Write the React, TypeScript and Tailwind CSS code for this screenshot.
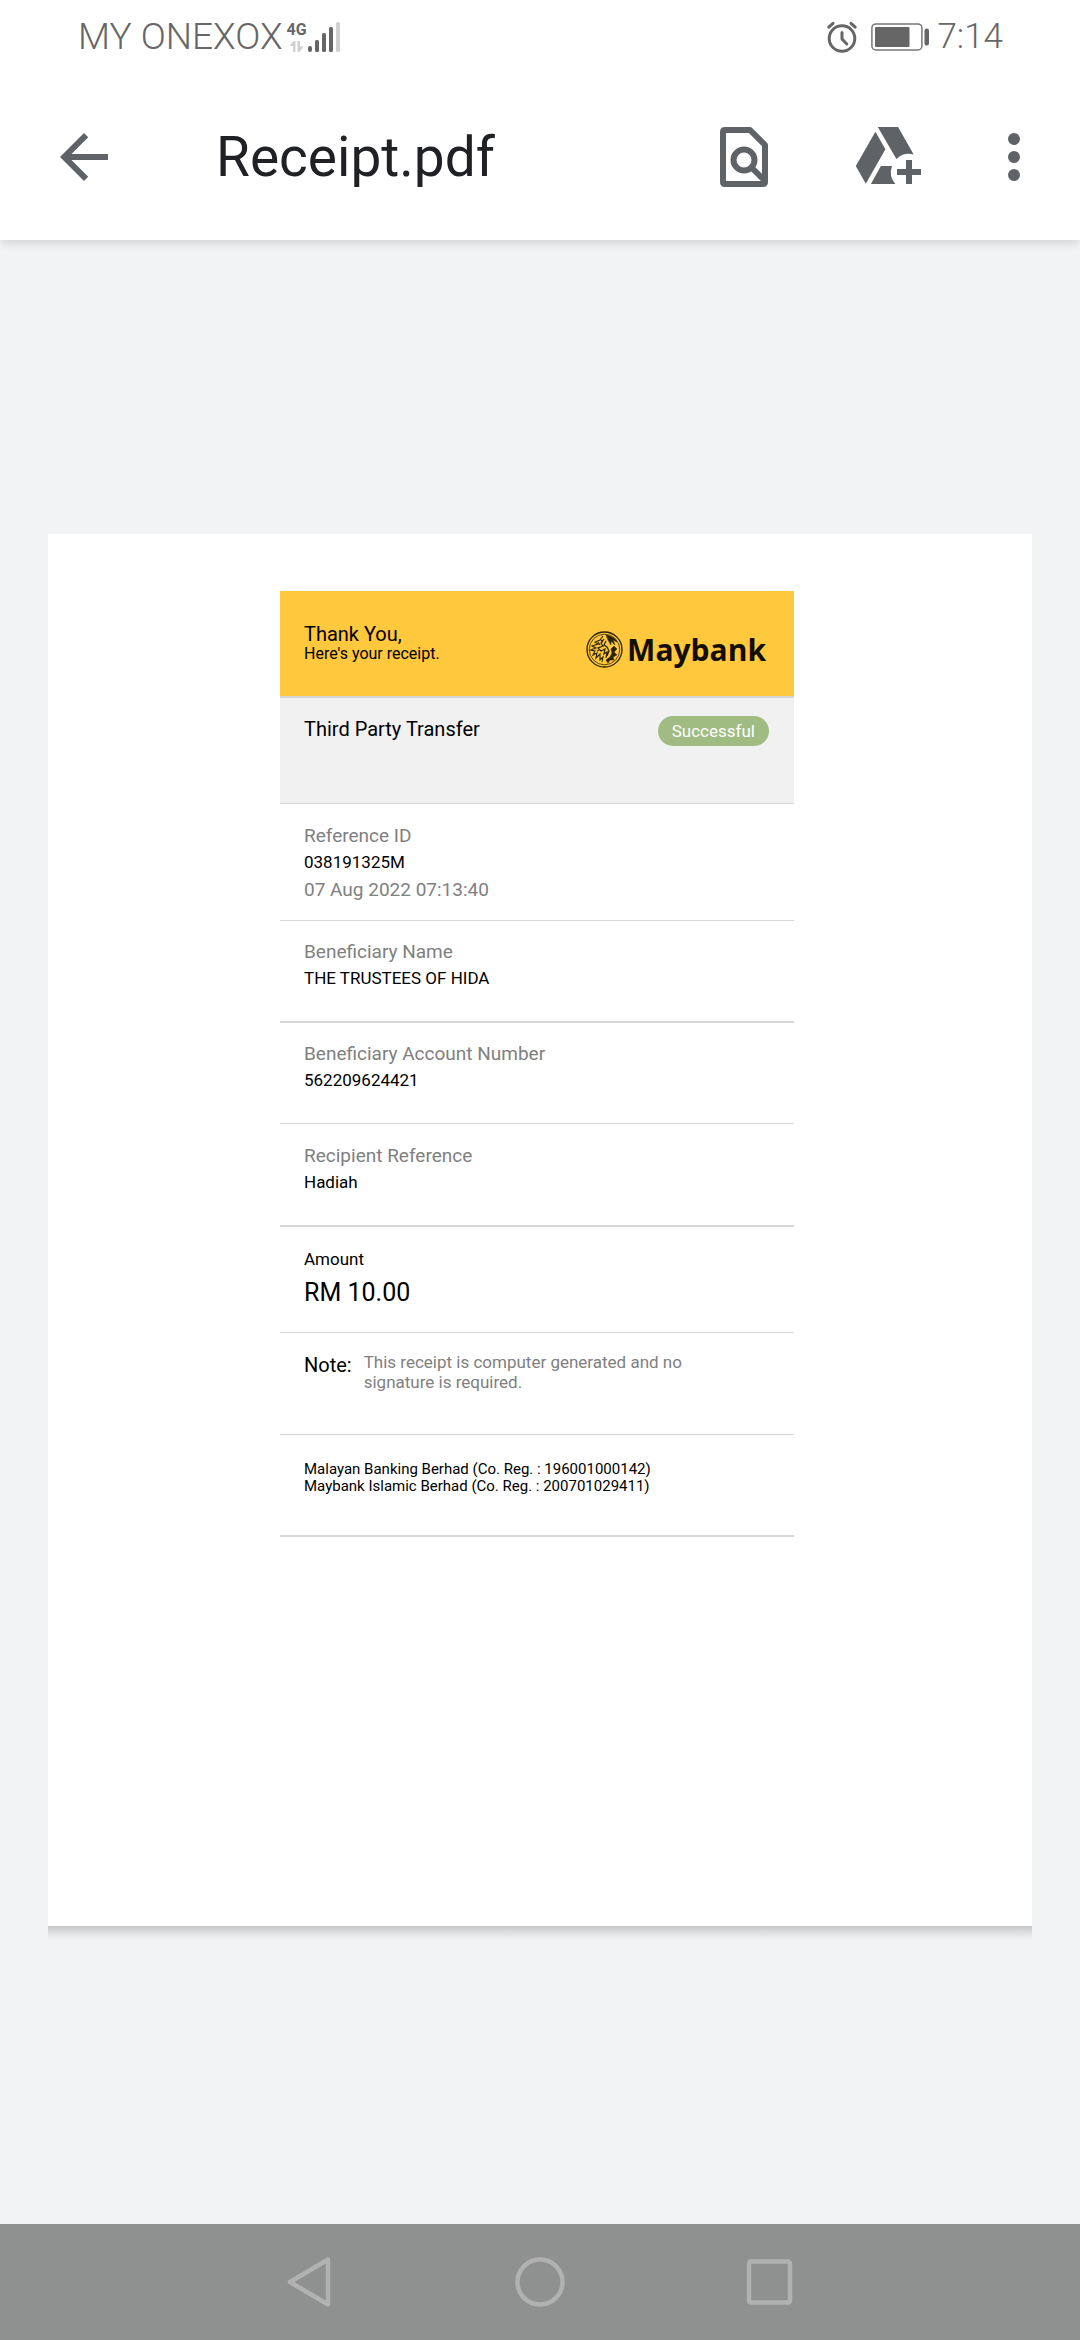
import React from "react";

function SignalIcon() {
  return (
    <svg width="34" height="32" viewBox="0 0 34 32" aria-hidden="true">
      <rect x="1" y="25" width="4" height="6" rx="2" fill="#666" />
      <rect x="8" y="19" width="4" height="12" rx="1.5" fill="#666" />
      <rect x="15" y="12" width="4" height="19" rx="1.5" fill="#666" />
      <rect x="22" y="6" width="4" height="25" rx="1.5" fill="#666" />
      <rect x="29" y="1" width="4" height="30" rx="1.5" fill="#d0d0d0" />
    </svg>
  );
}

function DataArrowsIcon() {
  return (
    <svg width="16" height="12" viewBox="0 0 16 12" aria-hidden="true" fill="#d0d0d0">
      <path d="M4 .5 6.5 0V11H4V5H.5Z" />
      <path d="M8.500 0H11V5.500H14.500L11 10.500 8.500 11Z" />
    </svg>
  );
}

function AlarmIcon() {
  return (
    <svg width="32" height="32" viewBox="0 0 32 32" fill="none" stroke="#666" strokeLinecap="round" aria-label="Alarm">
      <circle cx="16" cy="17.500" r="12.800" strokeWidth="3" />
      <path d="M16 11.500V18L20.800 23" strokeWidth="3" strokeLinejoin="round" />
      <path d="M2.800 6.200 7 2.300M29.200 6.200 25 2.300" strokeWidth="3" />
    </svg>
  );
}

function BatteryIcon() {
  return (
    <svg width="60" height="28" viewBox="0 0 60 28" aria-label="Battery">
      <rect x=".9" y=".9" width="50" height="26" rx="4" fill="none" stroke="#777" strokeWidth="1.500" />
      <rect x="4" y="4" width="34.500" height="20" rx="1" fill="#666" />
      <rect x="53.500" y="5.500" width="4.500" height="17" rx="2" fill="#666" />
    </svg>
  );
}

function StatusBar() {
  return (
    <div className="flex h-[73px] items-center justify-between pl-[78px] pr-[77px] text-[#666]">
      <div className="flex items-center gap-1">
        <span className="text-[37px] font-light leading-[40px]">MY ONEXOX</span>
        <div className="flex items-end">
          <div className="flex h-[32px] flex-col items-center justify-between">
            <span className="text-[16px] font-bold leading-[18px]">4G</span>
            <DataArrowsIcon />
          </div>
          <SignalIcon />
        </div>
      </div>
      <div className="flex items-center">
        <AlarmIcon />
        <div className="ml-[13px]">
          <BatteryIcon />
        </div>
        <span className="ml-[6px] text-[35px] font-light leading-[40px]">7:14</span>
      </div>
    </div>
  );
}

function Toolbar() {
  return (
    <div className="flex h-[167px] items-center pl-12 pr-[30px] text-[#5f6368]">
      <button type="button" aria-label="Back" className="shrink-0">
        <svg width="72" height="72" viewBox="0 0 24 24" fill="currentColor">
          <path d="M20 11H7.830l5.590-5.590L12 4l-8 8 8 8 1.410-1.410L7.830 13H20v-2z" />
        </svg>
      </button>
      <h1 className="ml-24 min-w-0 flex-1 truncate text-[55px] leading-[72px] text-[#202124]">Receipt.pdf</h1>
      <button type="button" aria-label="Find in document" className="shrink-0">
        <svg width="72" height="72" viewBox="0 0 72 72" fill="none" stroke="currentColor" strokeWidth="6">
          <path d="M17 9H42L57 24V61Q57 63 55 63H17Q15 63 15 61V11Q15 9 17 9Z" strokeLinejoin="round" />
          <circle cx="36" cy="39" r="10.500" />
          <path d="M43 46 57 60" />
        </svg>
      </button>
      <button type="button" aria-label="Add to Drive" className="ml-[72px] shrink-0">
        <svg width="72" height="72" viewBox="0 0 72 72" fill="currentColor">
          <path d="M23.400 10.700 33.400 28.300 13.800 62.700 3.800 45Z" />
          <path d="M25.800 6H46.100L61.700 33.500A18 18 0 0 0 44.400 38Z" />
          <path d="M28.900 45H40A18 18 0 0 0 43.400 63H18.900Z" />
          <path d="M54 39H60V48H69V54H60V63H54V54H45V48H54Z" />
        </svg>
      </button>
      <button type="button" aria-label="More options" className="ml-[54px] shrink-0">
        <svg width="72" height="72" viewBox="0 0 24 24" fill="currentColor">
          <circle cx="12" cy="6" r="2" />
          <circle cx="12" cy="12" r="2" />
          <circle cx="12" cy="18" r="2" />
        </svg>
      </button>
    </div>
  );
}

function MaybankLogo() {
  return (
    <div className="flex items-center gap-1 pt-3 text-[#120f02]">
      <svg width="37" height="37" viewBox="0 0 37 37" fill="none" stroke="#2b2205" aria-hidden="true">
        <circle cx="18.500" cy="18.500" r="17.500" strokeWidth="1.300" />
        <circle cx="18.500" cy="18.500" r="15.300" strokeWidth=".8" />
        <path
          d="M17 5 14 9 9 11 12 13 6 15 10 17 4.500 19 9 20 7 24 11 22 10 27 14 23 14 29 17 26 16 31"
          strokeWidth="1.100"
        />
        <path d="M18 8 15 12 17 15 12 17 15 20 19 18 18 23 21 21 20 27M20 10 18 14 21 16 23 20 21 25M12 11 14 14M15 9 17 11M13 19 11 20" strokeWidth="1.200" />
        <path d="M20 4C25 5 29 7 31 11L27 9 29 14 25 10 25 14 22 9Z" fill="#2b2205" strokeWidth=".5" />
        <path d="M28 15 31 18 28 21 31 24 27 26 28 29 24 29 22 32 20 29 24 26 26 22 25 18Z" fill="#2b2205" strokeWidth=".5" />
      </svg>
      <span className="font-['Open_Sans',sans-serif] text-[30px] font-bold leading-[37px]">Maybank</span>
    </div>
  );
}

type FieldProps = { label: string; value: string; note?: string; rule: string };

function Field({ label, value, note, rule }: FieldProps) {
  return (
    <div className={`border-[#d6d6d6] px-6 ${rule}`}>
      <dt className="text-[19px] leading-[27px] text-[#808080]">{label}</dt>
      <dd className="text-[17px] leading-[27px]">{value}</dd>
      {note && <dd className="text-[19px] leading-[27px] text-[#808080]">{note}</dd>}
    </div>
  );
}

function Receipt() {
  return (
    <article className="text-black">
      <header className="flex h-[107px] items-center justify-between border-b-2 border-[#d6d6d6] bg-[#ffc83d] pl-6 pr-7">
        <div className="pb-0.5">
          <p className="text-[20px] leading-[22px]">Thank You,</p>
          <p className="text-[16px] leading-[17px]">Here's your receipt.</p>
        </div>
        <MaybankLogo />
      </header>
      <section className="flex h-[106px] items-start justify-between border-b border-[#d6d6d6] bg-[#f1f1f1] pl-6 pr-[25px] pt-[18px]">
        <h2 className="text-[20px] leading-[26px]">Third Party Transfer</h2>
        <span className="rounded-full bg-[#a0bc82] px-[14px] text-[17px] leading-[30px] text-white">Successful</span>
      </section>
      <dl>
        <Field label="Reference ID" value="038191325M" note="07 Aug 2022 07:13:40" rule="h-[117px] border-b pt-[18px]" />
        <Field label="Beneficiary Name" value="THE TRUSTEES OF HIDA" rule="h-[102px] border-b-2 pt-[17px]" />
        <Field label="Beneficiary Account Number" value="562209624421" rule="h-[101px] border-b pt-[17px]" />
        <Field label="Recipient Reference" value="Hadiah" rule="h-[103px] border-b-2 pt-[18px]" />
        <div className="h-[106px] border-b border-[#d6d6d6] px-6 pt-[19px]">
          <dt className="text-[17px] leading-[27px]">Amount</dt>
          <dd className="text-[25px] leading-[40px]">RM 10.00</dd>
        </div>
        <div className="flex h-[102px] gap-3 border-b border-[#d6d6d6] px-6 pt-[19px]">
          <dt className="text-[20px] leading-[27px]">Note:</dt>
          <dd className="max-w-[340px] text-[17px] leading-[20px] text-[#808080]">
            This receipt is computer generated and no signature is required.
          </dd>
        </div>
      </dl>
      <footer className="h-[102px] border-b-2 border-[#d6d6d6] px-6 pt-[26px] text-[15px] leading-[17px]">
        <p>Malayan Banking Berhad (Co. Reg. : 196001000142)</p>
        <p>Maybank Islamic Berhad (Co. Reg. : 200701029411)</p>
      </footer>
    </article>
  );
}

function NavBar() {
  return (
    <nav className="flex h-[116px] items-center justify-center gap-[170px] bg-[#8f9190] text-[#b1b1b1]">
      <button type="button" aria-label="Back">
        <svg width="60" height="60" viewBox="0 0 60 60" fill="none" stroke="currentColor" strokeWidth="4.500" strokeLinejoin="round">
          <path d="M10 30 48 7.500V52.500Z" />
        </svg>
      </button>
      <button type="button" aria-label="Home">
        <svg width="60" height="60" viewBox="0 0 60 60" fill="none" stroke="currentColor" strokeWidth="4.500">
          <circle cx="30" cy="30" r="22.500" />
        </svg>
      </button>
      <button type="button" aria-label="Recent apps">
        <svg width="60" height="60" viewBox="0 0 60 60" fill="none" stroke="currentColor" strokeWidth="4.500">
          <rect x="9" y="9.500" width="41" height="41" rx="2" />
        </svg>
      </button>
    </nav>
  );
}

export default function App() {
  return (
    <div className="flex min-h-screen flex-col bg-[#f1f3f5] font-[Roboto,sans-serif]">
      <header className="bg-white shadow-[0_2px_10px_rgba(0,0,0,0.16)]">
        <StatusBar />
        <Toolbar />
      </header>
      <main className="flex flex-1 flex-col justify-center px-12 pb-1">
        <div className="min-h-[1392px] bg-white pl-[232px] pr-[238px] pt-[57px]">
          <Receipt />
        </div>
        <div className="-mb-[14px] h-[14px] bg-linear-to-b from-[#c6c6c6] via-[#dfe0e1] to-[#f1f3f5]" />
      </main>
      <NavBar />
    </div>
  );
}
